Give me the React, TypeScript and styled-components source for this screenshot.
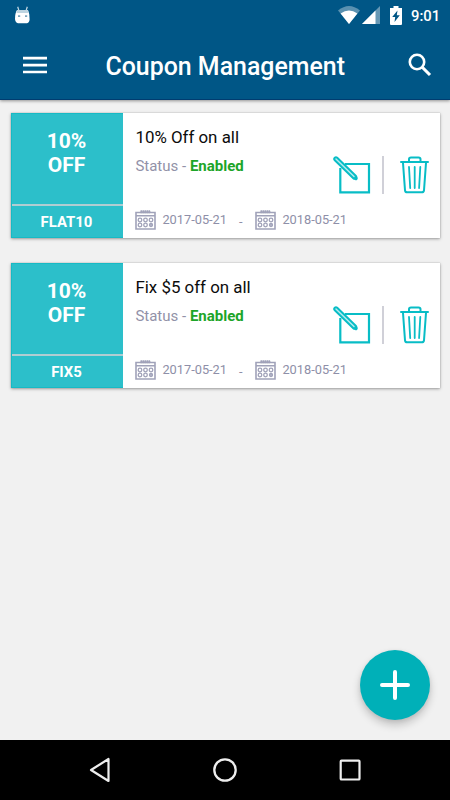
import React from 'react';
import styled, { createGlobalStyle } from 'styled-components';

const GlobalStyle = createGlobalStyle`
  * { box-sizing: border-box; }
  body { margin: 0; font-family: Roboto, sans-serif; background: #f1f1f1; }
  svg { display: block; flex: none; }
  button { border: 0; padding: 0; background: none; font: inherit; }
`;

const Screen = styled.div`
  width: 450px;
  height: 800px;
  display: flex;
  flex-direction: column;
  background: #f1f1f1;
  overflow: hidden;
`;

const Header = styled.header`
  height: 100px;
  flex: none;
  background: #005686;
  border-bottom: 1px solid #003c70;
  box-shadow: 0 1px 3px rgba(0, 0, 0, 0.4);
  color: #fff;
`;

const StatusBar = styled.div`
  height: 30px;
  display: flex;
  align-items: center;
  padding: 0 10px 0 14px;
`;

const StatusIcons = styled.div`
  margin-left: auto;
  display: flex;
  align-items: center;
`;

const SignalGap = styled.div`
  margin: 0 9px 0 2px;
`;

const Clock = styled.span`
  width: 29px;
  margin-left: 9px;
  padding-top: 1px;
  font-size: 14.8px;
  font-weight: 500;
  line-height: 30px;
  white-space: nowrap;
`;

const Toolbar = styled.div`
  height: 70px;
  display: flex;
  align-items: center;
  padding: 0 18px 0 23px;
`;

const SearchButton = styled.button`
  margin-left: auto;
`;

const Title = styled.h1`
  margin: 4px 0 0 58.5px;
  font-size: 24.9px;
  line-height: 30px;
  font-weight: 500;
  white-space: nowrap;
`;

const CouponList = styled.main`
  flex: 1;
  display: flex;
  flex-direction: column;
  gap: 25px;
  padding: 12.5px 10px 0 11px;
`;

const Card = styled.article`
  height: 125px;
  display: flex;
  background: #fff;
  box-shadow: 0 1px 3px rgba(0, 0, 0, 0.34), 0 0 1px rgba(0, 0, 0, 0.25);
`;

const Voucher = styled.div`
  width: 112px;
  display: flex;
  flex-direction: column;
  color: #fff;
  font-weight: 700;
  text-align: center;
  background: #2cbfca;
  border: 1px solid #16bac5;
  border-right: 0;
`;

const Discount = styled.div`
  flex: none;
  height: 90px;
  padding: 15px 2px 0 0;
  font-size: 21px;
  line-height: 24.5px;
`;

const Code = styled.div`
  flex: 1;
  border-top: 2px solid #b0cdd2;
  padding: 2px 2px 0 0;
  font-size: 14.9px;
  line-height: 29px;
`;

const Details = styled.div`
  flex: 1;
  display: grid;
  grid-template-columns: 1fr auto;
  grid-template-rows: 79.5px 1fr;
  padding: 14px 11px 0 12.4px;
`;

const Name = styled.h2`
  margin: 0 0 9px;
  font-size: 16.9px;
  line-height: 21px;
  font-weight: 400;
  color: #0c0c0c;
  white-space: nowrap;
`;

const Status = styled.p`
  margin: 0;
  font-size: 15px;
  line-height: 19px;
  color: #9292a8;
  white-space: nowrap;
`;

const Enabled = styled.b`
  font-weight: 700;
  color: #1ca528;
`;

const Actions = styled.div`
  display: flex;
  align-items: flex-start;
  padding-top: 29.5px;
`;

const ActionDivider = styled.span`
  width: 2px;
  height: 38px;
  margin: 0 16px 0 11px;
  background: #d0d0d8;
`;

const Dates = styled.div`
  grid-column: 1 / -1;
  height: 28px;
  display: flex;
  align-items: center;
  color: #8e8fa8;
  font-size: 12.8px;
`;

const DateText = styled.time`
  width: 64px;
  margin-left: 6px;
  line-height: 20px;
  white-space: nowrap;
`;

const DateDash = styled.span`
  width: 29px;
  text-align: center;
  padding-top: 3px;
`;

const AddButton = styled.button`
  position: fixed;
  left: 360px;
  top: 650px;
  width: 70px;
  height: 70px;
  display: grid;
  place-items: center;
  border-radius: 50%;
  background: #00b0b8;
  box-shadow: 0 5px 9px rgba(0, 0, 0, 0.2), 0 1px 5px rgba(0, 0, 0, 0.08);
`;

const NavBar = styled.nav`
  height: 60px;
  flex: none;
  display: flex;
  align-items: center;
  justify-content: space-between;
  padding: 0 87px;
  background: #000;
`;

const RobotIcon = () => (
  <svg width="17" height="18" viewBox="0 0 17 18">
    <path d="M5 5 3.700.8M12 5 13.300.8" stroke="#c7dbe5" strokeWidth="1.200" />
    <path d="M3 4h11q1.500 3 1.600 9 0 3.500-2.600 4.300H4Q1.200 16.500 1 13 1 7 3 4Z" fill="#fff" />
    <path d="M3.300 4h10.400l.9 3H2.400Z" fill="#bed5e1" />
    <path d="M4 9.200h2.200v1.800H4Zm7 0h2.200v1.800H11Z" fill="#7ba5bc" />
  </svg>
);

const WifiIcon = () => (
  <svg width="22" height="18" viewBox="0 0 22 18">
    <path d="M0 4.500Q11-4.500 22 4.500L11 18Z" fill="#5a91b0" />
    <path d="M2.600 7.500Q11 1.300 19.400 7.500L11 18Z" fill="#fff" />
  </svg>
);

const SignalIcon = () => (
  <svg width="19" height="19" viewBox="0 0 19 19">
    <path d="M18 0v18H0Z" fill="#6698b5" />
    <path d="M13.500 4.500V18H0Z" fill="#fff" />
  </svg>
);

const BatteryIcon = () => (
  <svg width="12" height="19" viewBox="0 0 12 19">
    <path d="M3.500 0h5v2H12v16q0 1-1 1H1q-1 0-1-1V2h3.500Z" fill="#fff" />
    <path d="M7.500 4.500 2.200 11h3L4.500 16l5.300-6.700h-3Z" fill="#005686" />
  </svg>
);

const MenuIcon = () => (
  <svg width="24" height="18" viewBox="0 0 24 18">
    <path d="M0 2.200h24M0 9.100h24M0 16h24" stroke="#fff" strokeWidth="2.700" />
  </svg>
);

const SearchIcon = () => (
  <svg width="24" height="24" viewBox="0 0 24 24" fill="none" stroke="#fff">
    <circle cx="9" cy="9" r="7.200" strokeWidth="2.600" />
    <path d="m14 14 8 8" strokeWidth="3.100" />
  </svg>
);

const CalendarIcon = () => (
  <svg width="21" height="20" viewBox="0 0 21 20" fill="none" stroke="#a0a2b9">
    <path d="M1 2.500h19v16.500H1ZM1 5.800h19" strokeWidth="1.600" />
    <path d="M5.500 1.800h10" strokeWidth="3" strokeDasharray="1.600 .4" />
    <path d="M5.500 2h10" strokeWidth="1.200" />
    <g strokeWidth="1.300">
      <circle cx="5" cy="10" r="1.800" />
      <circle cx="10.500" cy="10" r="1.800" />
      <circle cx="16" cy="10" r="1.800" />
      <circle cx="5" cy="15" r="1.800" />
      <circle cx="10.500" cy="15" r="1.800" />
      <circle cx="16" cy="15" r="1.500" fill="#b8bacb" />
    </g>
  </svg>
);

const EditIcon = () => (
  <svg width="38" height="38" viewBox="0 0 38 38" fill="none" stroke="#08bdc6">
    <path d="M12 8h24v28.300H7.300V12" strokeWidth="2.200" />
    <path d="M3 3 21.500 21" strokeWidth="5.400" strokeLinecap="round" />
    <path d="m21 20.500 2 2" strokeWidth="3.400" strokeLinecap="round" />
    <path d="M3 3 21 20.500" stroke="#b5ebef" strokeWidth="1.500" strokeLinecap="round" />
  </svg>
);

const TrashIcon = () => (
  <svg width="29" height="38" viewBox="0 0 29 38" fill="none" stroke="#08bdc6" strokeWidth="2" strokeLinecap="round" strokeLinejoin="round">
    <path d="M1 6h27M9 5.500V3.200q0-1.800 2-1.800h7.500q2 0 2 1.800v2.300" />
    <path d="m3 7 2 27.300q.2 2 2.300 2h14.400q2 0 2.300-2L26 7" />
    <path d="m9 11 1.200 21M14.700 11v21M20.300 11l-1.200 21" strokeWidth="1.800" />
  </svg>
);

const PlusIcon = () => (
  <svg width="30" height="30" viewBox="0 0 30 30">
    <path d="M15 2v26M2 15h26" stroke="#fff" strokeWidth="4" strokeLinecap="round" />
  </svg>
);

const BackIcon = () => (
  <svg width="26" height="26" viewBox="0 0 26 26">
    <path d="M21.500 2v22L4 13Z" fill="none" stroke="#eee" strokeWidth="2.200" strokeLinejoin="round" />
  </svg>
);

const HomeIcon = () => (
  <svg width="26" height="26" viewBox="0 0 26 26">
    <circle cx="13" cy="13" r="10.700" fill="none" stroke="#eee" strokeWidth="2.300" />
  </svg>
);

const RecentsIcon = () => (
  <svg width="26" height="26" viewBox="0 0 26 26">
    <rect x="3.700" y="3.700" width="18.800" height="18.800" rx=".8" fill="none" stroke="#eee" strokeWidth="2.200" />
  </svg>
);

const coupons = [
  { code: 'FLAT10', name: '10% Off on all', from: '2017-05-21', to: '2018-05-21' },
  { code: 'FIX5', name: 'Fix $5 off on all', from: '2017-05-21', to: '2018-05-21' },
];

export default function App() {
  return (
    <Screen>
      <GlobalStyle />
      <Header>
        <StatusBar>
          <RobotIcon />
          <StatusIcons>
            <WifiIcon />
            <SignalGap><SignalIcon /></SignalGap>
            <BatteryIcon />
            <Clock>9:01</Clock>
          </StatusIcons>
        </StatusBar>
        <Toolbar>
          <button aria-label="Menu"><MenuIcon /></button>
          <Title>Coupon Management</Title>
          <SearchButton aria-label="Search"><SearchIcon /></SearchButton>
        </Toolbar>
      </Header>
      <CouponList>
        {coupons.map((coupon) => (
          <Card key={coupon.code}>
            <Voucher>
              <Discount>10%<br />OFF</Discount>
              <Code>{coupon.code}</Code>
            </Voucher>
            <Details>
              <div>
                <Name>{coupon.name}</Name>
                <Status>Status - <Enabled>Enabled</Enabled></Status>
              </div>
              <Actions>
                <button aria-label="Edit"><EditIcon /></button>
                <ActionDivider />
                <button aria-label="Delete"><TrashIcon /></button>
              </Actions>
              <Dates>
                <CalendarIcon />
                <DateText>{coupon.from}</DateText>
                <DateDash>-</DateDash>
                <CalendarIcon />
                <DateText>{coupon.to}</DateText>
              </Dates>
            </Details>
          </Card>
        ))}
      </CouponList>
      <AddButton aria-label="Add coupon"><PlusIcon /></AddButton>
      <NavBar>
        <BackIcon />
        <HomeIcon />
        <RecentsIcon />
      </NavBar>
    </Screen>
  );
}
